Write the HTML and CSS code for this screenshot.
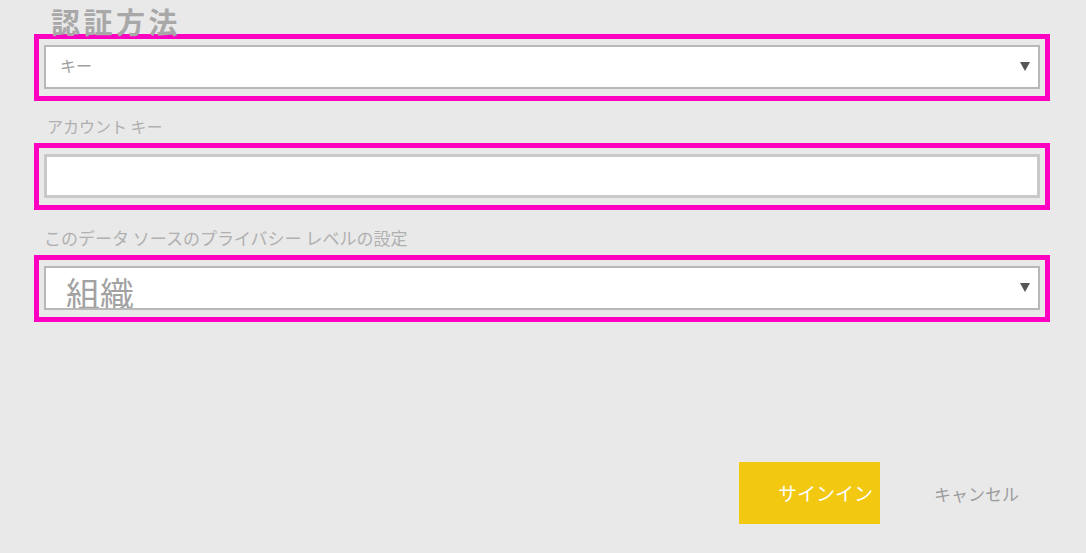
FILE: index.html
```html
<!DOCTYPE html>
<html lang="ja">
<head>
<meta charset="utf-8">
<title>認証方法</title>
<link rel="stylesheet" href="styles.css">
</head>
<body>
<div class="page">
  <div class="title">認証方法</div>
  <div class="hl hl-first">
    <div class="field select">
      <span class="placeholder">キー</span>
      <svg class="arrow" width="10" height="9" viewBox="0 0 10 9"><polygon points="0,0 10,0 5,9" fill="#555"/></svg>
    </div>
  </div>
  <div class="label label-key">アカウント キー</div>
  <div class="hl">
    <div class="field input"></div>
  </div>
  <div class="label label-privacy">このデータ ソースのプライバシー レベルの設定</div>
  <div class="hl">
    <div class="field select">
      <span class="value">組織</span>
      <svg class="arrow" width="10" height="9" viewBox="0 0 10 9"><polygon points="0,0 10,0 5,9" fill="#555"/></svg>
    </div>
  </div>
  <div class="actions">
    <div class="btn-primary">サインイン</div>
    <div class="btn-cancel">キャンセル</div>
  </div>
</div>
</body>
</html>
```
FILE: styles.css
```css
html, body {
  margin: 0;
  padding: 0;
  background: #e9e9e9;
}
body {
  font-family: "Noto Sans CJK JP", "Noto Sans", sans-serif;
  width: 1086px;
  height: 553px;
  overflow: hidden;
}
.page {
  padding-left: 34px;
  width: 1016px;
}
.title {
  position: relative;
  z-index: 1;
  height: 34px;
  padding-left: 17px;
  box-sizing: border-box;
  padding-top: 7px;
  font-size: 29px;
  line-height: 29px;
  letter-spacing: 3.5px;
  font-weight: 700;
  color: #a8a8a8;
  white-space: nowrap;
}
.hl {
  border: 5px solid #ff00c0;
  padding: 6px 5px 7px;
  box-sizing: border-box;
  height: 67px;
}
.field {
  box-sizing: border-box;
  height: 44px;
  background: #fff;
  display: flex;
  align-items: center;
  overflow: hidden;
  position: relative;
}
.select {
  border: 2px solid #b8b8b8;
}
.input {
  border: 3px solid #c9c9c9;
}
.placeholder {
  padding-left: 14px;
  font-size: 16px;
  line-height: 20px;
  color: #a0a0a0;
  margin-top: -4px;
}
.value {
  align-self: flex-start;
  padding-left: 20px;
  padding-top: 8px;
  font-size: 34px;
  line-height: 34px;
  color: #a2a2a2;
}
.arrow {
  margin-left: auto;
  margin-right: 8px;
  margin-top: -1px;
  flex: none;
}
.label {
  color: #b0b0b0;
  white-space: nowrap;
  box-sizing: border-box;
}
.label-key {
  padding: 15px 0 7px 13px;
  font-size: 16px;
  line-height: 20px;
  height: 42px;
}
.label-privacy {
  padding: 17px 0 6px 10px;
  font-size: 17px;
  line-height: 22px;
  height: 45px;
}
.actions {
  display: flex;
  align-items: center;
  margin-top: 140px;
  padding-left: 705px;
}
.btn-primary {
  width: 141px;
  height: 62px;
  box-sizing: border-box;
  background: #f2c811;
  color: #fff;
  font-size: 19px;
  line-height: 62px;
  padding-left: 39px;
  white-space: nowrap;
}
.btn-cancel {
  margin-left: 54px;
  font-size: 17px;
  color: #9c9c9c;
  white-space: nowrap;
}
```
